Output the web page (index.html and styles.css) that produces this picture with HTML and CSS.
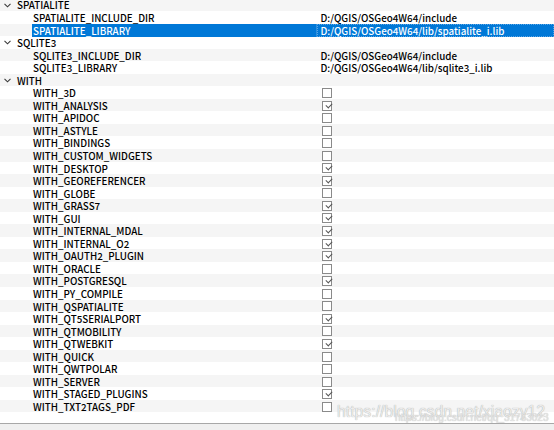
FILE: index.html
```html
<!DOCTYPE html>
<html>
<head>
<meta charset="utf-8">
<link rel="stylesheet" href="styles.css">
</head>
<body>
<div class="frame">
  <div class="tree">
    <div class="rows">
      <div class="row group"><div class="name"><svg class="chev" width="7" height="5" viewBox="0 0 7 5"><polyline points="0.5,0.8 3.5,3.8 6.5,0.8"/></svg>SPATIALITE</div><div class="val"></div></div>
      <div class="row"><div class="name child">SPATIALITE_INCLUDE_DIR</div><div class="val">D:/QGIS/OSGeo4W64/include</div></div>
      <div class="row selected"><div class="name child"><span class="sel">SPATIALITE_LIBRARY</span></div><div class="val">D:/QGIS/OSGeo4W64/lib/spatialite_i.lib</div></div>
      <div class="row group"><div class="name"><svg class="chev" width="7" height="5" viewBox="0 0 7 5"><polyline points="0.5,0.8 3.5,3.8 6.5,0.8"/></svg>SQLITE3</div><div class="val"></div></div>
      <div class="row"><div class="name child">SQLITE3_INCLUDE_DIR</div><div class="val">D:/QGIS/OSGeo4W64/include</div></div>
      <div class="row"><div class="name child">SQLITE3_LIBRARY</div><div class="val">D:/QGIS/OSGeo4W64/lib/sqlite3_i.lib</div></div>
      <div class="row group"><div class="name"><svg class="chev" width="7" height="5" viewBox="0 0 7 5"><polyline points="0.5,0.8 3.5,3.8 6.5,0.8"/></svg>WITH</div><div class="val"></div></div>
      <div class="row"><div class="name child">WITH_3D</div><div class="val"><span class="cb"></span></div></div>
      <div class="row"><div class="name child">WITH_ANALYSIS</div><div class="val"><span class="cb on"></span></div></div>
      <div class="row"><div class="name child">WITH_APIDOC</div><div class="val"><span class="cb"></span></div></div>
      <div class="row"><div class="name child">WITH_ASTYLE</div><div class="val"><span class="cb"></span></div></div>
      <div class="row"><div class="name child">WITH_BINDINGS</div><div class="val"><span class="cb"></span></div></div>
      <div class="row"><div class="name child">WITH_CUSTOM_WIDGETS</div><div class="val"><span class="cb"></span></div></div>
      <div class="row"><div class="name child">WITH_DESKTOP</div><div class="val"><span class="cb on"></span></div></div>
      <div class="row"><div class="name child">WITH_GEOREFERENCER</div><div class="val"><span class="cb on"></span></div></div>
      <div class="row"><div class="name child">WITH_GLOBE</div><div class="val"><span class="cb"></span></div></div>
      <div class="row"><div class="name child">WITH_GRASS7</div><div class="val"><span class="cb on"></span></div></div>
      <div class="row"><div class="name child">WITH_GUI</div><div class="val"><span class="cb on"></span></div></div>
      <div class="row"><div class="name child">WITH_INTERNAL_MDAL</div><div class="val"><span class="cb on"></span></div></div>
      <div class="row"><div class="name child">WITH_INTERNAL_O2</div><div class="val"><span class="cb on"></span></div></div>
      <div class="row"><div class="name child">WITH_OAUTH2_PLUGIN</div><div class="val"><span class="cb on"></span></div></div>
      <div class="row"><div class="name child">WITH_ORACLE</div><div class="val"><span class="cb"></span></div></div>
      <div class="row"><div class="name child">WITH_POSTGRESQL</div><div class="val"><span class="cb on"></span></div></div>
      <div class="row"><div class="name child">WITH_PY_COMPILE</div><div class="val"><span class="cb"></span></div></div>
      <div class="row"><div class="name child">WITH_QSPATIALITE</div><div class="val"><span class="cb"></span></div></div>
      <div class="row"><div class="name child">WITH_QT5SERIALPORT</div><div class="val"><span class="cb on"></span></div></div>
      <div class="row"><div class="name child">WITH_QTMOBILITY</div><div class="val"><span class="cb"></span></div></div>
      <div class="row"><div class="name child">WITH_QTWEBKIT</div><div class="val"><span class="cb on"></span></div></div>
      <div class="row"><div class="name child">WITH_QUICK</div><div class="val"><span class="cb"></span></div></div>
      <div class="row"><div class="name child">WITH_QWTPOLAR</div><div class="val"><span class="cb"></span></div></div>
      <div class="row"><div class="name child">WITH_SERVER</div><div class="val"><span class="cb"></span></div></div>
      <div class="row"><div class="name child">WITH_STAGED_PLUGINS</div><div class="val"><span class="cb on"></span></div></div>
      <div class="row"><div class="name child">WITH_TXT2TAGS_PDF</div><div class="val"><span class="cb"></span></div></div>
    </div>
  </div>
  <div class="bottom"><span class="cut">按下配置按钮，然后点击生成按钮即可生成项目文件，再用编译器进行编译即可</span></div>
  <div class="wm big">https://blog.csdn.net/xiaozy12</div>
  <div class="wm small">https://blog.csdn.net/qq_31763023</div>
</div>
</body>
</html>
```

FILE: styles.css
```css
* { box-sizing: border-box; }
html, body { margin: 0; padding: 0; }
body {
  width: 554px;
  height: 430px;
  overflow: hidden;
  background: #ffffff;
  font-family: "Noto Sans CJK SC", "Noto Sans", sans-serif;
  font-size: 9.8px;
  font-weight: 500;
  color: #000000;
}
.frame {
  position: relative;
  width: 554px;
  height: 430px;
  display: flex;
  flex-direction: column;
}
.tree {
  height: 423px;
  overflow: hidden;
  background: #ffffff;
}
.rows { margin-top: -1.6px; }
.row {
  display: grid;
  grid-template-columns: 317px 1fr;
  height: 12.56px;
  line-height: 12.56px;
  white-space: nowrap;
}
.row:nth-child(odd) { background: #f5f5f5; }
.name {
  display: flex;
  align-items: center;
  padding-left: 4px;
  padding-top: 1px;
}
.name.child { padding-left: 33px; }
.chev {
  margin-right: 6px;
  margin-top: -1px;
  fill: none;
  stroke: #3a3a3a;
  stroke-width: 1.1;
}
.val {
  display: flex;
  align-items: center;
  padding-left: 3.5px;
  padding-top: 1px;
}
.selected { background: #ffffff; }
.selected .name.child { padding-left: 32px; padding-top: 0; }
.sel {
  display: flex;
  align-items: center;
  height: 100%;
  flex: 1;
  background: #0078d7;
  color: #ffffff;
  padding-left: 1px;
  padding-top: 1px;
  border-right: 1px solid #2f8fdc;
}
.selected .val {
  background: #0078d7;
  color: #ffffff;
  outline: 1px dotted #5aa6e6;
  outline-offset: -1px;
}
.cb {
  display: block;
  width: 10px;
  height: 10px;
  margin-left: 1.5px;
  margin-top: -1px;
  border: 1px solid #8a8a8a;
  background: #ffffff;
  position: relative;
}
.cb.on::after {
  content: "";
  position: absolute;
  left: 2.5px;
  top: 1px;
  width: 5px;
  height: 3px;
  border-left: 1px solid #555555;
  border-bottom: 1px solid #555555;
  transform: rotate(-45deg);
  transform-origin: center;
}
.bottom {
  flex: 1;
  border-top: 1px solid #a8a8a8;
  background: #f0f0f0;
  overflow: hidden;
  position: relative;
}
.cut {
  display: block;
  padding-left: 40px;
  margin-top: 6px;
  font-size: 12px;
  line-height: 14px;
  font-weight: 400;
  color: #111111;
  letter-spacing: 1.5px;
}
.wm {
  position: absolute;
  font-family: "Liberation Sans", Arial, sans-serif;
  font-weight: 400;
  white-space: nowrap;
}
.big {
  left: 337px;
  top: 403.5px;
  font-size: 15.8px;
  line-height: 16px;
  color: #ececec;
  text-shadow: 0 0 1px #9a9a9a;
}
.small {
  left: 395px;
  top: 413px;
  font-size: 10px;
  line-height: 10px;
  color: #e6e6e6;
  text-shadow: 0 0 1px #b0b0b0;
}
```
